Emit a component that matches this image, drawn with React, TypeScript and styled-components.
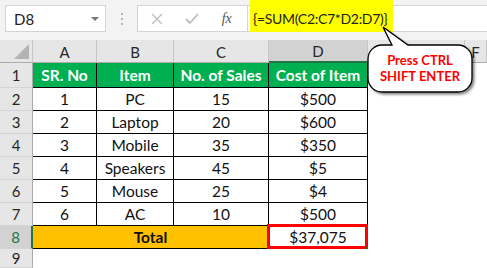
import React from 'react';
import styled, { createGlobalStyle } from 'styled-components';

const GlobalStyle = createGlobalStyle`
  html, body {
    margin: 0;
    padding: 0;
    background: #ffffff;
    font-family: 'Lato', 'Liberation Sans', sans-serif;
  }
`;

const Page = styled.div`
  position: relative;
  width: 487px;
  height: 268px;
  overflow: hidden;
  background: #ffffff;
`;

const Toolbar = styled.div`
  height: 40px;
  box-sizing: border-box;
  padding: 5px 0 0 5px;
  display: flex;
  align-items: flex-start;
  background: #f3f3f3;
`;

const NameBox = styled.div`
  width: 101px;
  height: 27px;
  box-sizing: border-box;
  border: 1px solid #d4d4d4;
  background: #ffffff;
  display: flex;
  align-items: center;
  justify-content: space-between;
  padding: 0 6px 0 8px;
  font-size: 15px;
  color: #222;
`;

const DropArrow = styled.span`
  width: 0;
  height: 0;
  border-left: 4px solid transparent;
  border-right: 4px solid transparent;
  border-top: 4px solid #777;
`;

const Grip = styled.div`
  width: 31px;
  height: 27px;
  display: flex;
  flex-direction: column;
  align-items: center;
  justify-content: center;
  gap: 3px;
  & > span {
    width: 2px;
    height: 2px;
    background: #b5b5b5;
  }
`;

const IconBox = styled.div`
  width: 110px;
  height: 27px;
  box-sizing: border-box;
  border: 1px solid #d4d4d4;
  border-right: none;
  background: #ffffff;
  display: flex;
  align-items: center;
  justify-content: space-around;
  padding: 0 4px 0 2px;
`;

const Fx = styled.span`
  font-family: 'Liberation Serif', serif;
  font-style: italic;
  font-size: 14px;
  color: #555;
`;

const FormulaBox = styled.div`
  flex: 1;
  height: 27px;
  box-sizing: border-box;
  border: 1px solid #d4d4d4;
  border-right: none;
  background: #ffffff;
  padding-left: 2px;
  display: flex;
  align-items: flex-start;
`;

const Highlight = styled.div`
  margin-top: -6px;
  height: 32px;
  width: 143px;
  box-sizing: border-box;
  background: #ffff00;
  display: flex;
  align-items: center;
  padding: 4px 0 0 3px;
  font-size: 14px;
  letter-spacing: -0.3px;
  color: #222;
`;

const Sheet = styled.div`
  display: grid;
  grid-template-columns: 33px 64px 77px 95px 99px 97px 1fr;
  grid-template-rows: 23px 25px repeat(7, 23px) 1fr;
  height: 228px;
`;

const Corner = styled.div`
  background: #e6e6e6;
  border-right: 1px solid #c6c6c6;
  border-bottom: 1px solid #ababab;
  box-sizing: border-box;
  display: flex;
  align-items: flex-end;
  justify-content: flex-end;
  padding: 0 3px 3px 0;
`;

const Triangle = styled.span`
  width: 0;
  height: 0;
  border-left: 15px solid transparent;
  border-bottom: 15px solid #b3b3b3;
`;

const ColHead = styled.div<{ $active?: boolean }>`
  background: ${p => (p.$active ? '#d2d2d2' : '#e6e6e6')};
  border-right: 1px solid #c6c6c6;
  border-bottom: ${p => (p.$active ? '2px solid #217346' : '1px solid #ababab')};
  box-sizing: border-box;
  display: flex;
  align-items: center;
  justify-content: center;
  font-size: 15px;
  color: #262626;
  padding-top: 1px;
`;

const RowHead = styled.div<{ $active?: boolean }>`
  background: ${p => (p.$active ? '#d2d2d2' : '#e6e6e6')};
  border-right: ${p => (p.$active ? '2px solid #217346' : '1px solid #ababab')};
  border-bottom: 1px solid #d4d4d4;
  box-sizing: border-box;
  display: flex;
  align-items: center;
  justify-content: center;
  font-size: 15px;
  color: ${p => (p.$active ? '#217346' : '#262626')};
`;

const Cell = styled.div<{ $kind?: 'head' | 'data' | 'total' | 'blank' }>`
  box-sizing: border-box;
  display: flex;
  align-items: center;
  justify-content: center;
  font-size: 15.5px;
  white-space: nowrap;
  position: relative;
  color: ${p => (p.$kind === 'head' ? '#ffffff' : '#111')};
  font-weight: ${p => (p.$kind === 'head' || p.$kind === 'total' ? 700 : 400)};
  background: ${p =>
    p.$kind === 'head' ? '#00b050' : p.$kind === 'total' ? '#ffc000' : '#ffffff'};
  border-right: ${p => (p.$kind === 'blank' ? 'none' : '1px solid #000')};
  border-bottom: ${p => (p.$kind === 'blank' ? 'none' : '1px solid #000')};
`;

const TotalLabel = styled(Cell)`
  grid-column: span 3;
`;

const ResultCell = styled(Cell)`
  &::before {
    content: '';
    position: absolute;
    left: -2px;
    top: -2px;
    right: -1px;
    bottom: -1px;
    border: 3px solid #ff0000;
  }
  &::after {
    content: '';
    position: absolute;
    right: -3px;
    bottom: -3px;
    width: 4px;
    height: 4px;
    background: #217346;
  }
`;

const Callout = styled.div`
  position: absolute;
  left: 360px;
  top: 20px;
  width: 120px;
  height: 80px;
`;

const CalloutText = styled.div`
  position: absolute;
  left: 8px;
  top: 25px;
  width: 104px;
  height: 47px;
  display: flex;
  flex-direction: column;
  align-items: center;
  justify-content: center;
  gap: 1px;
  color: #ff0000;
  font-weight: 700;
  font-size: 13px;
  line-height: 15px;
`;

const rows = [
  ['1', 'PC', '15', '$500'],
  ['2', 'Laptop', '20', '$600'],
  ['3', 'Mobile', '35', '$350'],
  ['4', 'Speakers', '45', '$5'],
  ['5', 'Mouse', '25', '$4'],
  ['6', 'AC', '10', '$500'],
];

export default function App() {
  return (
    <Page>
      <GlobalStyle />
      <Toolbar>
        <NameBox>
          D8
          <DropArrow />
        </NameBox>
        <Grip>
          <span />
          <span />
          <span />
        </Grip>
        <IconBox>
          <svg width="12" height="12" viewBox="0 0 12 12">
            <path d="M1 1 L11 11 M11 1 L1 11" stroke="#bdbdbd" strokeWidth="1.4" />
          </svg>
          <svg width="14" height="12" viewBox="0 0 14 12">
            <path d="M1 6 L5 10 L13 1" stroke="#bdbdbd" strokeWidth="1.8" fill="none" />
          </svg>
          <Fx>fx</Fx>
        </IconBox>
        <FormulaBox>
          <Highlight>{'{=SUM(C2:C7*D2:D7)}'}</Highlight>
        </FormulaBox>
      </Toolbar>

      <Sheet>
        <Corner>
          <Triangle />
        </Corner>
        <ColHead>A</ColHead>
        <ColHead>B</ColHead>
        <ColHead>C</ColHead>
        <ColHead $active>D</ColHead>
        <ColHead>E</ColHead>
        <ColHead>F</ColHead>

        <RowHead>1</RowHead>
        <Cell $kind="head">SR. No</Cell>
        <Cell $kind="head">Item</Cell>
        <Cell $kind="head">No. of Sales</Cell>
        <Cell $kind="head">Cost of Item</Cell>
        <Cell $kind="blank" />
        <Cell $kind="blank" />

        {rows.map((r, i) => (
          <React.Fragment key={i}>
            <RowHead>{i + 2}</RowHead>
            {r.map((v, j) => (
              <Cell key={j} $kind="data">
                {v}
              </Cell>
            ))}
            <Cell $kind="blank" />
            <Cell $kind="blank" />
          </React.Fragment>
        ))}

        <RowHead $active>8</RowHead>
        <TotalLabel $kind="total">Total</TotalLabel>
        <ResultCell $kind="data">$37,075</ResultCell>
        <Cell $kind="blank" />
        <Cell $kind="blank" />

        <RowHead>9</RowHead>
        <Cell $kind="blank" />
        <Cell $kind="blank" />
        <Cell $kind="blank" />
        <Cell $kind="blank" />
        <Cell $kind="blank" />
        <Cell $kind="blank" />
      </Sheet>

      <Callout>
        <svg width="120" height="80" viewBox="0 0 120 80">
          <defs>
            <filter id="sh" x="-10%" y="-10%" width="130%" height="140%">
              <feDropShadow dx="2" dy="2" stdDeviation="1.2" floodColor="#000" floodOpacity="0.45" />
            </filter>
          </defs>
          <path
            d="M32 25 L23 7 L48 25 H98 A14 14 0 0 1 112 39 V58 A14 14 0 0 1 98 72 H22 A14 14 0 0 1 8 58 V39 A14 14 0 0 1 22 25 Z"
            fill="#ffffff"
            stroke="#000"
            strokeWidth="1.3"
            filter="url(#sh)"
          />
        </svg>
        <CalloutText>
          <span>Press CTRL</span>
          <span>SHIFT ENTER</span>
        </CalloutText>
      </Callout>
    </Page>
  );
}
